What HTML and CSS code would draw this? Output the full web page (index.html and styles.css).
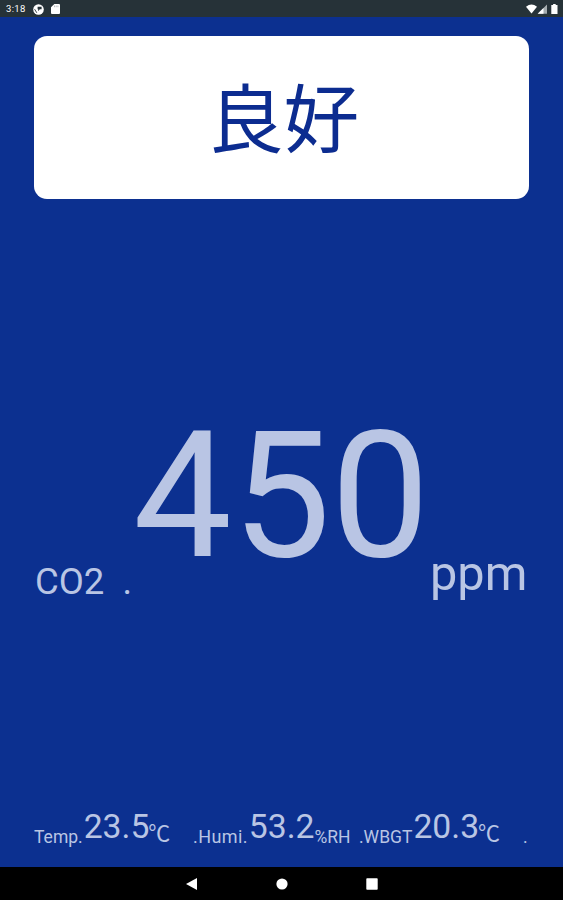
FILE: index.html
```html
<!DOCTYPE html>
<html lang="ja">
<head>
    <meta charset="utf-8">
    <meta name="viewport" content="width=device-width, initial-scale=1.0">
    <title>CO2 Monitor</title>
    <link rel="stylesheet" href="styles.css">
</head>
<body>
    <header class="status-bar">
        <span class="clock">3:18</span>
        <svg class="notify" width="11" height="11" viewBox="0 0 11 11">
            <circle cx="5.5" cy="5.5" r="5.3" fill="#fff"/>
            <path d="M4.6 2.8h4v2.4H6.8L5.2 7.2V5.2h-.6z" fill="#263238"/>
            <path d="M1.6 5.2L3.8 8.8" stroke="#263238" stroke-width="0.9"/>
        </svg>
        <svg class="card" width="9" height="10" viewBox="0 0 9 10">
            <path d="M3.3 0H8q1 0 1 1v8q0 1-1 1H1q-1 0-1-1V3.3z" fill="#fff"/>
            <path d="M3.5 1.5v1.7M5.2 1.5v1.7M6.9 1.5v1.7" stroke="#9da4a7" stroke-width="0.7"/>
        </svg>
        <svg class="system" width="32" height="11" viewBox="0 0 32 11">
            <path d="M0 2.8Q5.5-1.6 11 2.8L5.5 9.6z" fill="#fff"/>
            <path d="M21 .5v9.3h-9.3z" fill="#a5acaf"/>
            <path d="M17.5 4v5.8h-5.8z" fill="#fff"/>
            <path d="M25.3 1h1.8V0h2.6v1h1.8v9h-6.2z" fill="#fff"/>
        </svg>
    </header>

    <main class="monitor">
        <div class="level">良好</div>

        <div class="co2">
            <div class="co2-label"><span>CO2</span><span>.</span></div>
            <div class="co2-value">450</div>
            <div class="co2-unit">ppm</div>
        </div>

        <div class="sensors">
            <div class="sensor temp">
                <span class="name">Temp.</span><span class="value">23.5</span><span class="unit celsius">℃</span>
            </div>
            <div class="sensor humi">
                <span class="name">.Humi.</span><span class="value">53.2</span><span class="unit">%RH</span>
            </div>
            <div class="sensor wbgt">
                <span class="name">.WBGT</span><span class="value">20.3</span><span class="unit celsius">℃</span>
            </div>
            <span class="name">.</span>
        </div>
    </main>

    <nav class="nav-bar">
        <svg width="12" height="12" viewBox="0 0 12 12"><path d="M0 6L11 0v12z" fill="#fff"/></svg>
        <svg width="12" height="12" viewBox="0 0 12 12"><circle cx="6" cy="6" r="5.6" fill="#fff"/></svg>
        <svg width="12" height="12" viewBox="0 0 12 12"><rect x="0.3" y="0.3" width="11.4" height="11.4" rx="0.8" fill="#fff"/></svg>
    </nav>
</body>
</html>
```

FILE: styles.css
```css
* {
    box-sizing: border-box;
}
body {
    display: flex;
    flex-direction: column;
    height: 900px;
    margin: 0;
    background-color: #0c3090;
    color: #b9c5e4;
    font-family: Roboto, "Noto Sans CJK JP", sans-serif;
    line-height: 1;
}
.status-bar {
    display: flex;
    align-items: center;
    height: 17px;
    padding: 1px 5px 0 6px;
    background-color: #263238;
    color: #fff;
}
.clock {
    width: 27px;
    font-size: 9.5px;
    letter-spacing: 0.3px;
}
.card {
    margin-left: 7px;
}
.system {
    margin-left: auto;
}
.monitor {
    flex: 1;
    display: flex;
    flex-direction: column;
    padding: 19px 34px 0;
}
.level {
    height: 163px;
    padding-left: 4px;
    border-radius: 13px;
    background-color: #fff;
    color: #0c2c90;
    font-family: "Noto Sans CJK JP", sans-serif;
    font-size: 75.5px;
    line-height: 156px;
    text-align: center;
}
.co2 {
    display: flex;
    align-items: flex-end;
    height: 401px;
    white-space: nowrap;
}
.co2-label {
    display: flex;
    justify-content: space-between;
    width: 97px;
    margin: 0 1px;
    font-size: 36.5px;
}
.co2-value {
    width: 297px;
    margin-bottom: 16px;
    font-size: 176px;
}
.co2-unit {
    margin-bottom: 1px;
    font-size: 48.7px;
}
.sensors {
    display: flex;
    align-items: flex-end;
    height: 246px;
    white-space: nowrap;
}
.sensor {
    display: flex;
    align-items: flex-end;
}
.temp {
    width: 159px;
}
.humi {
    width: 166px;
}
.humi .name {
    font-size: 18px;
    letter-spacing: 0.4px;
}
.wbgt {
    width: 164px;
}
.name {
    font-size: 17.5px;
}
.value {
    margin: 0 0 2px 1px;
    font-size: 33.7px;
}
.unit {
    font-size: 17.5px;
}
.celsius {
    margin: 0 0 1px -1px;
    font-size: 22px;
}
.nav-bar {
    display: flex;
    justify-content: center;
    align-items: center;
    gap: 78px;
    height: 33px;
    background-color: #000;
}
```
